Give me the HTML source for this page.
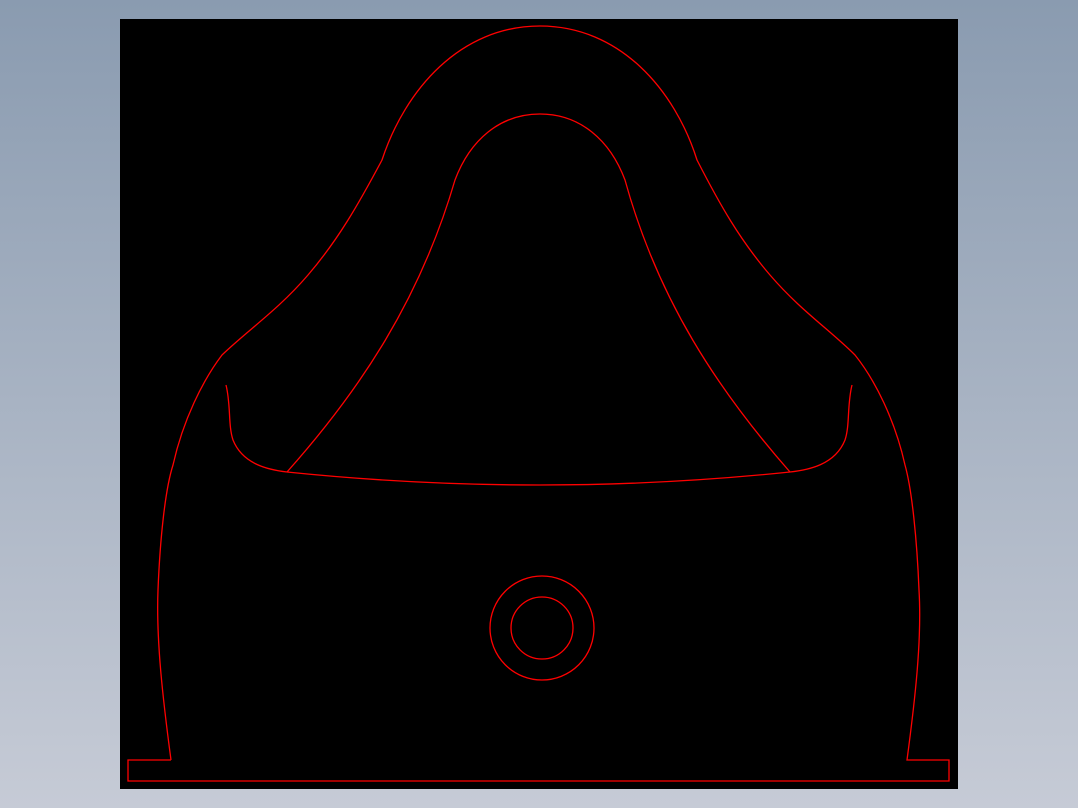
<!DOCTYPE html>
<html><head><style>
html,body{margin:0;padding:0;width:1078px;height:808px;overflow:hidden;background:linear-gradient(#8a9bb0,#c6cbd6);}
svg{position:absolute;left:0;top:0}
</style></head><body>
<svg width="1078" height="808" viewBox="0 0 1078 808">
<rect x="120" y="19" width="838" height="770" fill="#000"/>
<g fill="none" stroke="#f00" stroke-width="1.3">
<path d="M171,760 L128,760 L128,781 L949,781 L949,760 L907,760
 C915,700 922,640 919,590 C917,540 912,490 905,465 C895,420 875,380 855,355
 C830,330 800,310 770,275 C740,240 720,205 697,160
 C675,90 620,26 540,26 C460,26 405,90 382,160
 C358,205 338,240 308,275 C278,310 248,330 222,355
 C203,380 183,420 173,465 C165,490 160,540 158,590 C156,640 163,700 171,760"/>
<path d="M287,472 C360,390 420,300 455,180 C470,140 500,114 540,114 C580,114 610,140 625,180 C658,300 718,390 790,472"/>
<path d="M287,472 Q540,498 790,472"/>
<path d="M226,385 C231,405 228,425 233,440 C243,465 270,470 287,472"/>
<path d="M852,385 C847,405 850,425 845,440 C835,465 808,470 790,472"/>
<circle cx="542" cy="628" r="52"/>
<circle cx="542" cy="628" r="31"/>
</g>
</svg>
</body></html>
